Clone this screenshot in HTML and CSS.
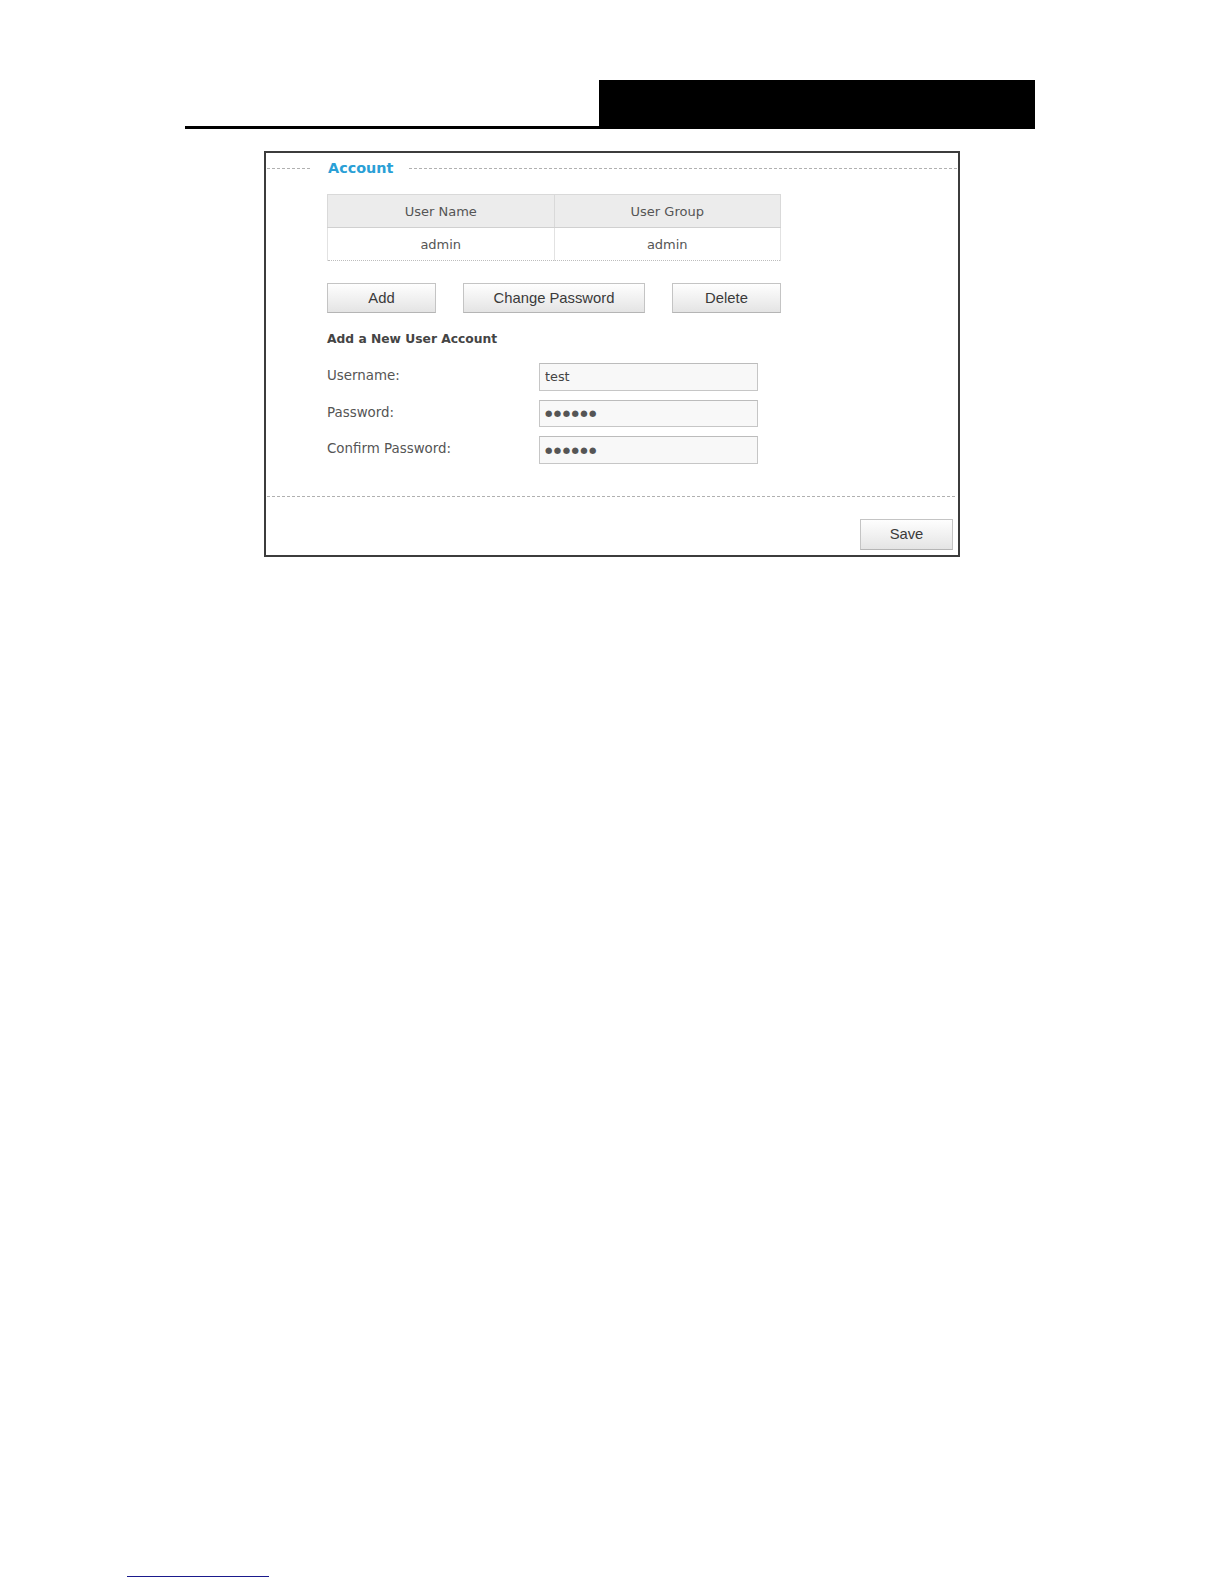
FILE: index.html
```html
<!DOCTYPE html>
<html>
<head>
<meta charset="utf-8">
<link rel="stylesheet" href="styles.css">
</head>
<body>
<div class="page-header">
  <div class="header-block"></div>
</div>

<div class="panel">
  <div class="panel-title">
    <span class="dash dash-left"></span>
    <span class="title-text">Account</span>
    <span class="dash dash-right"></span>
  </div>

  <div class="content">
    <table class="accounts">
      <thead>
        <tr><th>User Name</th><th>User Group</th></tr>
      </thead>
      <tbody>
        <tr><td>admin</td><td>admin</td></tr>
      </tbody>
    </table>

    <div class="actions">
      <button class="btn btn-small">Add</button>
      <button class="btn btn-wide">Change Password</button>
      <button class="btn btn-small">Delete</button>
    </div>

    <div class="subtitle">Add a New User Account</div>

    <div class="form">
      <div class="form-row">
        <label class="form-label">Username:</label>
        <input class="form-input" type="text" value="test">
      </div>
      <div class="form-row">
        <label class="form-label">Password:</label>
        <input class="form-input pw" type="text" value="●●●●●●" aria-label="Password (masked)">
      </div>
      <div class="form-row">
        <label class="form-label">Confirm Password:</label>
        <input class="form-input pw" type="text" value="●●●●●●" aria-label="Confirm password (masked)">
      </div>
    </div>
  </div>

  <div class="dash dash-full"></div>

  <div class="panel-footer">
    <button class="btn btn-save">Save</button>
  </div>
</div>

<div class="footer-line"></div>
</body>
</html>
```

FILE: styles.css
```css
html, body {
  margin: 0;
  padding: 0;
  background: #ffffff;
}

body {
  font-family: "DejaVu Sans", Verdana, sans-serif;
  color: #555555;
}

.page-header {
  margin-top: 80px;
  margin-left: 185px;
  width: 850px;
  height: 46px;
  border-bottom: 3px solid #000000;
  display: flex;
  justify-content: flex-end;
}

.header-block {
  width: 436px;
  height: 46px;
  background: #000000;
}

.panel {
  box-sizing: border-box;
  margin-top: 22px;
  margin-left: 264px;
  width: 696px;
  height: 406px;
  border: 2px solid #3c3c3c;
  background: #ffffff;
  display: flex;
  flex-direction: column;
}

.panel-title {
  display: flex;
  align-items: center;
  height: 20px;
  margin-top: 5px;
  margin-right: 1px;
}

.dash {
  height: 1px;
  background: repeating-linear-gradient(to right, #b0b0b0 0 3px, transparent 3px 5px);
}

.dash-left {
  width: 44px;
  margin-left: 1px;
}

.dash-right {
  flex: 1;
}

.title-text {
  margin: 0 16px 0 17px;
  font-weight: bold;
  font-size: 14.4px;
  line-height: 20px;
  color: #2a9fd6;
}

.content {
  padding-left: 61px;
}

.accounts {
  margin-top: 16px;
  width: 454px;
  border-collapse: collapse;
  font-size: 13px;
  color: #555555;
}

.accounts th,
.accounts td {
  text-align: center;
  font-weight: normal;
  padding: 0;
  width: 50%;
}

.accounts th {
  height: 32px;
  background: #ececec;
  border: 1px solid #d9d9d9;
  border-bottom: 1px solid #d0d0d0;
}

.accounts th + th {
  border-left: 1px solid #f8f8f8;
}

.accounts td {
  height: 32px;
  background: #ffffff;
  border-left: 1px solid #e2e2e2;
  border-right: 1px solid #e2e2e2;
  border-bottom: 1px dotted #bdbdbd;
}

.accounts td + td {
  border-left: 1px dotted #e0e0e0;
}

.actions {
  margin-top: 22px;
  width: 454px;
  display: flex;
  justify-content: space-between;
}

.btn {
  box-sizing: border-box;
  height: 30px;
  padding: 0;
  border: 1px solid #c4c4c4;
  border-bottom-color: #b5b5b5;
  background: linear-gradient(#fefefe, #f0f0f0 55%, #e4e4e4);
  font-family: "Liberation Sans", Arial, sans-serif;
  font-size: 14.8px;
  color: #3a3a3a;
}

.btn-small {
  width: 109px;
}

.btn-wide {
  width: 182px;
}

.subtitle {
  margin-top: 17px;
  font-size: 12.3px;
  line-height: 18px;
  font-weight: bold;
  color: #444444;
}

.form {
  margin-top: 15px;
  display: flex;
  flex-direction: column;
  gap: 9px;
}

.form-row {
  display: flex;
  align-items: center;
}

.form-label {
  width: 212px;
  font-size: 13.4px;
  line-height: 16px;
  margin-top: -1px;
  color: #555555;
}

.form-input {
  box-sizing: border-box;
  width: 219px;
  height: 27.6px;
  margin: 0;
  padding: 0 5px;
  border: 1px solid #c6c6c6;
  border-top-color: #bcbcbc;
  background: #f8f8f8;
  font-family: "DejaVu Sans", Verdana, sans-serif;
  font-size: 12.8px;
  color: #444444;
  outline: none;
}

.form-input.pw {
  font-size: 8.5px;
  letter-spacing: 1.4px;
  color: #555555;
}

.dash-full {
  margin-top: 32px;
  margin-left: 1px;
  margin-right: 1px;
}

.panel-footer {
  display: flex;
  justify-content: flex-end;
  padding-right: 5px;
  margin-top: 22px;
}

.btn-save {
  width: 93px;
  height: 31px;
}

.footer-line {
  margin-top: 1019px;
  margin-left: 127px;
  width: 142px;
  height: 1px;
  background: #1a1a8c;
}
```
